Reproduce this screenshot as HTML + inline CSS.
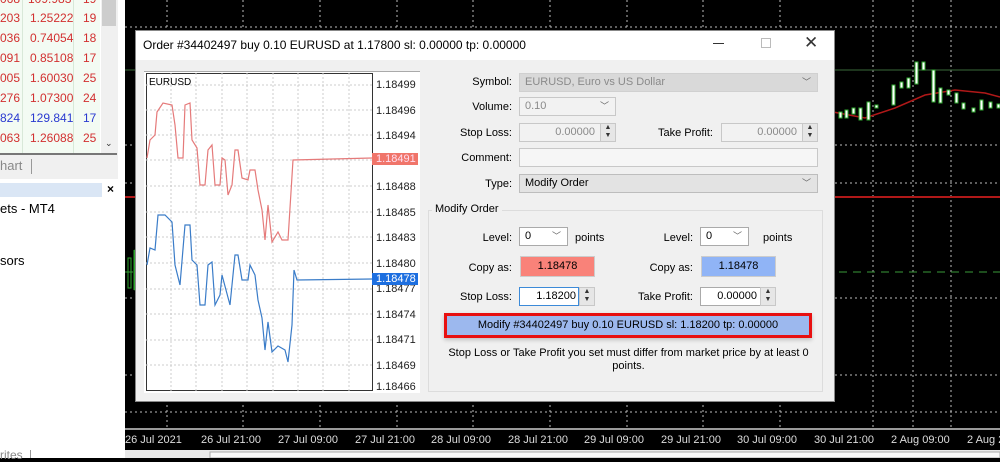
<!DOCTYPE html>
<html><head><meta charset="utf-8"><style>
*{margin:0;padding:0;box-sizing:border-box}
body{width:1000px;height:458px;overflow:hidden;position:relative;background:#000;font-family:"Liberation Sans",sans-serif;font-size:11px;color:#000}
.a{position:absolute;white-space:nowrap}
.lbl{position:absolute;text-align:right;width:90px;font-size:11px}
.fld{position:absolute;border:1px solid #c8c8c8;background:#fff;height:19px;font-size:11px;line-height:17px;padding:0 5px}
.dis{background:#ececec;color:#8a8a8a}
.chev{position:absolute;right:6px;top:0;font-size:9px;color:#666}
.spin{position:absolute;width:16px;height:19px;border:1px solid #c8c8c8;background:#e6e6e6;font-size:7px;line-height:8px;text-align:center;color:#333}
.tl{position:absolute;top:434px;color:#ddd;font-size:11px;white-space:nowrap}
</style></head><body>
<!-- left panel -->
<div class="a" style="left:0;top:0;width:120px;height:458px;background:#fff"></div>
<div class="a" style="left:0;top:0;width:100px;height:155px;background:#f3fbf3"></div>
<div class="a" style="left:22px;top:0;width:1px;height:155px;background:#d8e8d8"></div>
<div class="a" style="left:73px;top:0;width:1px;height:155px;background:#d8e8d8"></div>
<div class="a" style="left:101px;top:0;width:17px;height:155px;background:#f0f0f0"></div>
<div class="a" style="left:102px;top:0;width:14px;height:26px;background:#cdcdcd"></div>
<div class="a" style="left:105px;top:138px;font-size:9px;color:#333">⌄</div>
<div class="a" style="left:0;top:0;font-size:12px;line-height:20px;color:#d23030">
<div style="position:relative;height:20px;top:-11px"><span class="a" style="left:0">068</span><span class="a" style="left:28px">109.983</span><span class="a" style="left:83px">19</span></div>
</div>
<div class="a" style="left:0;top:8px;font-size:12px;line-height:20px;color:#d23030;width:100px">
<div style="position:relative;height:20px"><span class="a" style="left:0">203</span><span class="a" style="left:30px">1.25222</span><span class="a" style="left:83px">19</span></div>
<div style="position:relative;height:20px"><span class="a" style="left:0">036</span><span class="a" style="left:30px">0.74054</span><span class="a" style="left:83px">18</span></div>
<div style="position:relative;height:20px"><span class="a" style="left:0">091</span><span class="a" style="left:30px">0.85108</span><span class="a" style="left:83px">17</span></div>
<div style="position:relative;height:20px"><span class="a" style="left:0">005</span><span class="a" style="left:30px">1.60030</span><span class="a" style="left:83px">25</span></div>
<div style="position:relative;height:20px"><span class="a" style="left:0">276</span><span class="a" style="left:30px">1.07300</span><span class="a" style="left:83px">24</span></div>
<div style="position:relative;height:20px;color:#2a3ad0"><span class="a" style="left:0">824</span><span class="a" style="left:30px">129.841</span><span class="a" style="left:83px">17</span></div>
<div style="position:relative;height:20px"><span class="a" style="left:0">063</span><span class="a" style="left:30px">1.26088</span><span class="a" style="left:83px">25</span></div>
</div>
<div class="a" style="left:0;top:153px;width:117px;height:2px;background:#777"></div>
<div class="a" style="left:0;top:155px;width:118px;height:24px;background:#f0f0f0"></div>
<div class="a" style="left:0;top:158px;font-size:13px;color:#888">hart</div>
<div class="a" style="left:31px;top:159px;width:1px;height:15px;background:#999"></div>
<div class="a" style="left:0;top:183px;width:102px;height:14px;background:#dae6f5"></div>
<div class="a" style="left:107px;top:182px;font-size:12px;font-weight:bold">×</div>
<div class="a" style="left:0;top:201px;font-size:13px">ets - MT4</div>
<div class="a" style="left:0;top:253px;font-size:13px">sors</div>
<div class="a" style="left:0;top:448px;font-size:12px;color:#888">rites</div>
<div class="a" style="left:30px;top:450px;width:1px;height:8px;background:#999"></div>
<div class="a" style="left:118px;top:0;width:7px;height:458px;background:#fff"></div>
<!-- background chart -->
<svg class="a" style="left:125px;top:0" width="875" height="458">
<g stroke="#bbb" stroke-dasharray="2,3" stroke-width="1">
<line x1="0" y1="27" x2="875" y2="27"/><line x1="0" y1="70" x2="875" y2="70"/><line x1="0" y1="145" x2="875" y2="145"/><line x1="0" y1="183" x2="875" y2="183"/><line x1="0" y1="298" x2="875" y2="298"/><line x1="0" y1="375" x2="875" y2="375"/><line x1="0" y1="412" x2="875" y2="412"/>
<line x1="42" y1="0" x2="42" y2="428"/><line x1="118" y1="0" x2="118" y2="428"/><line x1="195" y1="0" x2="195" y2="428"/><line x1="272" y1="0" x2="272" y2="428"/><line x1="348" y1="0" x2="348" y2="428"/><line x1="425" y1="0" x2="425" y2="428"/><line x1="502" y1="0" x2="502" y2="428"/><line x1="578" y1="0" x2="578" y2="428"/><line x1="655" y1="0" x2="655" y2="428"/><line x1="748" y1="0" x2="748" y2="428"/><line x1="788" y1="0" x2="788" y2="428"/><line x1="826" y1="0" x2="826" y2="428"/>
</g>
<line x1="0" y1="197" x2="875" y2="197" stroke="#b01818" stroke-width="2"/>
<line x1="0" y1="70" x2="875" y2="70" stroke="#3a6a3a" stroke-width="1"/>
<line x1="0" y1="272" x2="875" y2="272" stroke="#3a9a3a" stroke-dasharray="8,6"/>
<polyline points="708,112 740,118 770,108 800,95 830,90 860,93 875,97" fill="none" stroke="#b01818" stroke-width="1.5"/>
<g stroke="#2ea82e" fill="#fff" transform="translate(712,0)">
<rect x="2" y="112" width="3" height="6"/><rect x="8" y="110" width="3" height="8"/><rect x="15" y="108" width="3" height="6"/><rect x="22" y="108" width="3" height="12"/><rect x="30" y="102" width="3" height="18"/><rect x="38" y="105" width="3" height="3"/><rect x="55" y="85" width="3" height="20"/><rect x="63" y="82" width="3" height="6"/><rect x="70" y="78" width="3" height="10"/><rect x="78" y="62" width="3" height="22"/><rect x="85" y="62" width="3" height="8"/><rect x="95" y="70" width="3" height="32"/><rect x="102" y="88" width="3" height="15"/><rect x="110" y="90" width="3" height="5"/><rect x="118" y="93" width="3" height="10"/><rect x="125" y="103" width="3" height="6"/><rect x="135" y="108" width="3" height="4"/><rect x="143" y="100" width="3" height="10"/><rect x="152" y="102" width="3" height="6"/><rect x="160" y="104" width="3" height="4"/>
</g>
<g stroke="#2ea82e" fill="none"><path d="M9 250V290M3 258h3v30h-3zM10 250h3v40h-3z"/></g>
<rect x="0" y="428" width="875" height="2" fill="#999"/>
<rect x="0" y="450" width="875" height="8" fill="#e8e8e8"/>
<rect x="85" y="452" width="790" height="6" fill="#f8f8f8" stroke="#aaa"/>
</svg>
<div class="tl" style="left:125px">26 Jul 2021</div>
<div class="tl" style="left:201px">26 Jul 21:00</div>
<div class="tl" style="left:278px">27 Jul 09:00</div>
<div class="tl" style="left:355px">27 Jul 21:00</div>
<div class="tl" style="left:431px">28 Jul 09:00</div>
<div class="tl" style="left:508px">28 Jul 21:00</div>
<div class="tl" style="left:584px">29 Jul 09:00</div>
<div class="tl" style="left:661px">29 Jul 21:00</div>
<div class="tl" style="left:737px">30 Jul 09:00</div>
<div class="tl" style="left:814px">30 Jul 21:00</div>
<div class="tl" style="left:891px">2 Aug 09:00</div>
<div class="tl" style="left:967px">2 Aug 21:00</div>
<!-- dialog -->
<div class="a" style="left:135px;top:30px;width:700px;height:372px;background:#f0f0f0;border:1px solid #888"></div>
<div class="a" style="left:136px;top:31px;width:698px;height:29px;background:#fff"></div>
<div class="a" style="left:143px;top:38px;font-size:12px">Order #34402497 buy 0.10 EURUSD at 1.17800 sl: 0.00000 tp: 0.00000</div>
<div class="a" style="left:713px;top:43px;width:11px;height:1px;background:#333"></div>
<div class="a" style="left:761px;top:38px;width:10px;height:10px;border:1px solid #bbb"></div>
<div class="a" style="left:804px;top:33px;font-size:17px;color:#333">✕</div>
<!-- inner chart -->
<div class="a" style="left:144px;top:71px;width:276px;height:322px;background:#fff;border-top:1px solid #aaa"></div>
<svg class="a" style="left:146px;top:73px" width="227" height="318">
<rect x="0.5" y="0.5" width="226" height="317" fill="#fff" stroke="#333"/>
<g stroke="#ccc" stroke-dasharray="2,2">
<line x1="0" y1="12" x2="227" y2="12"/><line x1="0" y1="37" x2="227" y2="37"/><line x1="0" y1="62" x2="227" y2="62"/><line x1="0" y1="87" x2="227" y2="87"/><line x1="0" y1="113" x2="227" y2="113"/><line x1="0" y1="139" x2="227" y2="139"/><line x1="0" y1="164" x2="227" y2="164"/><line x1="0" y1="190" x2="227" y2="190"/><line x1="0" y1="216" x2="227" y2="216"/><line x1="0" y1="241" x2="227" y2="241"/><line x1="0" y1="267" x2="227" y2="267"/><line x1="0" y1="292" x2="227" y2="292"/>
<line x1="25" y1="0" x2="25" y2="318"/><line x1="50" y1="0" x2="50" y2="318"/><line x1="76" y1="0" x2="76" y2="318"/><line x1="101" y1="0" x2="101" y2="318"/><line x1="127" y1="0" x2="127" y2="318"/><line x1="152" y1="0" x2="152" y2="318"/><line x1="177" y1="0" x2="177" y2="318"/><line x1="203" y1="0" x2="203" y2="318"/>
</g>
<g transform="translate(-146,-73)" fill="none" stroke-width="1.2">
<polyline stroke="#e57a7a" points="147,158 150,140 155,135 157,112 163,103 172,105 175,125 178,158 183,158 185,105 190,103 192,140 197,148 200,185 205,185 208,150 212,145 215,185 220,185 222,158 225,160 228,195 232,185 235,150 238,150 242,178 248,180 250,170 255,170 258,190 262,210 265,240 268,205 272,242 278,232 282,240 288,240 293,160 372,158"/>
<polyline stroke="#3a7cc8" points="147,265 150,248 155,250 158,215 165,215 172,222 175,265 180,285 185,225 190,225 192,260 197,265 200,305 205,305 208,265 212,262 215,305 220,295 222,275 226,290 230,305 235,255 238,255 242,280 248,280 250,265 255,275 258,300 262,318 265,350 268,322 272,352 278,346 285,350 288,362 292,325 294,270 297,280 372,279"/>
</g>
<text x="3" y="12" font-family="Liberation Sans" font-size="10">EURUSD</text>
</svg>
<div class="a" style="left:376px;top:73px;font-size:11px;line-height:25.5px;color:#222">1.18499<br>1.18496<br>1.18494<br>1.18491<br>1.18488<br>1.18485<br>1.18483<br>1.18480<br>1.18477<br>1.18474<br>1.18471<br>1.18469</div>
<div class="a" style="left:376px;top:381px;font-size:11px;color:#222">1.18466</div>
<div class="a" style="left:372px;top:153px;width:46px;height:12px;background:#f0756a;color:#fde;font-size:11px;line-height:12px;padding-left:4px">1.18491</div>
<div class="a" style="left:372px;top:273px;width:46px;height:12px;background:#1d6fe0;color:#fff;font-size:11px;line-height:12px;padding-left:4px">1.18478</div>
<!-- form -->
<div class="lbl" style="left:422px;top:76px">Symbol:</div>
<div class="fld dis" style="left:519px;top:73px;width:299px;background:#d9d9d9;border-color:#d0d0d0">EURUSD, Euro vs US Dollar<span class="chev">﹀</span></div>
<div class="lbl" style="left:422px;top:101px">Volume:</div>
<div class="fld dis" style="left:519px;top:97px;width:97px;background:#f2f2f2">0.10<span class="chev">﹀</span></div>
<div class="lbl" style="left:422px;top:127px">Stop Loss:</div>
<div class="fld dis" style="left:519px;top:123px;width:82px;background:#f2f2f2;text-align:right">0.00000</div>
<div class="spin" style="left:600px;top:123px">▲<br>▼</div>
<div class="lbl" style="left:623px;top:127px">Take Profit:</div>
<div class="fld dis" style="left:721px;top:123px;width:82px;background:#f2f2f2;text-align:right">0.00000</div>
<div class="spin" style="left:802px;top:123px">▲<br>▼</div>
<div class="lbl" style="left:422px;top:152px">Comment:</div>
<div class="fld" style="left:519px;top:148px;width:299px;background:#f6f6f6"></div>
<div class="lbl" style="left:422px;top:178px">Type:</div>
<div class="fld" style="left:519px;top:174px;width:299px;background:#e3e3e3;border-color:#bdbdbd">Modify Order<span class="chev">﹀</span></div>
<div class="a" style="left:428px;top:210px;width:395px;height:182px;border:1px solid #dcdcdc"></div>
<div class="a" style="left:432px;top:203px;background:#f0f0f0;padding:0 3px">Modify Order</div>
<div class="lbl" style="left:422px;top:232px">Level:</div>
<div class="fld" style="left:519px;top:227px;width:49px;border-color:#aaa">0<span class="chev">﹀</span></div>
<div class="a" style="left:575px;top:232px">points</div>
<div class="lbl" style="left:603px;top:232px">Level:</div>
<div class="fld" style="left:700px;top:227px;width:49px;border-color:#aaa">0<span class="chev">﹀</span></div>
<div class="a" style="left:763px;top:232px">points</div>
<div class="lbl" style="left:422px;top:262px">Copy as:</div>
<div class="a" style="left:520px;top:256px;width:75px;height:21px;background:#f98279;border:1px solid #ccc;text-align:center;line-height:19px">1.18478</div>
<div class="lbl" style="left:603px;top:262px">Copy as:</div>
<div class="a" style="left:701px;top:256px;width:75px;height:21px;background:#90b4f6;border:1px solid #ccc;text-align:center;line-height:19px">1.18478</div>
<div class="lbl" style="left:422px;top:291px">Stop Loss:</div>
<div class="fld" style="left:519px;top:287px;width:60px;border-color:#3c8ad8;text-align:right;padding-right:2px">1.18200</div>
<div class="spin" style="left:579px;top:287px">▲<br>▼</div>
<div class="lbl" style="left:603px;top:291px">Take Profit:</div>
<div class="fld" style="left:700px;top:287px;width:61px;border-color:#aaa;text-align:right;padding-right:3px">0.00000</div>
<div class="spin" style="left:760px;top:287px">▲<br>▼</div>
<div class="a" style="left:444px;top:313px;width:368px;height:25px;border:3px solid #e81010;background:#9cb8ee;text-align:center;line-height:19px;box-shadow:0 2px 4px rgba(0,0,0,.2)">Modify #34402497 buy 0.10 EURUSD sl: 1.18200 tp: 0.00000</div>
<div class="a" style="left:446px;top:347px;width:365px;text-align:center;white-space:normal;line-height:13px">Stop Loss or Take Profit you set must differ from market price by at least 0 points.</div>
</body></html>
